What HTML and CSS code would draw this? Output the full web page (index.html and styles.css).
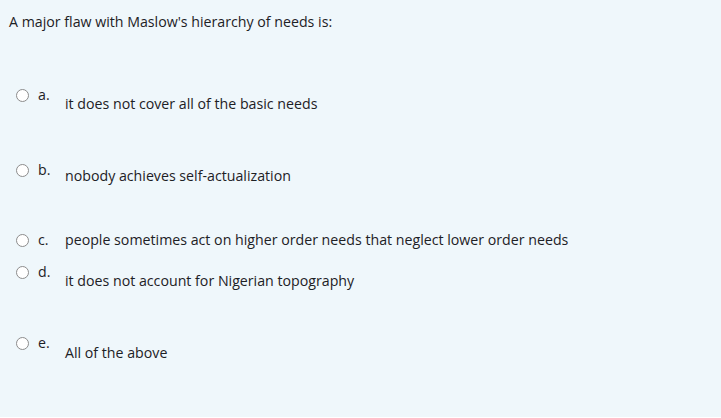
FILE: index.html
```html
<!DOCTYPE html>
<html>
<head>
<meta charset="utf-8">
<link rel="stylesheet" href="styles.css">
</head>
<body>
<div class="formulation">
  <div class="qtext">A major flaw with Maslow's hierarchy of needs is:</div>
  <div class="answers">
    <div class="opt opt-a">
      <span class="radio"></span><span class="letter">a.</span><span class="text">it does not cover all of the basic needs</span>
    </div>
    <div class="opt opt-b">
      <span class="radio"></span><span class="letter">b.</span><span class="text">nobody achieves self-actualization</span>
    </div>
    <div class="opt opt-c">
      <span class="radio"></span><span class="letter">c.</span><span class="text">people sometimes act on higher order needs that neglect lower order needs</span>
    </div>
    <div class="opt opt-d">
      <span class="radio"></span><span class="letter">d.</span><span class="text">it does not account for Nigerian topography</span>
    </div>
    <div class="opt opt-e">
      <span class="radio"></span><span class="letter">e.</span><span class="text">All of the above</span>
    </div>
  </div>
</div>
</body>
</html>
```

FILE: styles.css
```css
html, body {
  margin: 0;
  padding: 0;
  background: #ffffff;
}
body {
  font-family: "Open Sans", "Noto Sans", sans-serif;
  font-size: 14.2px;
  color: #1d2125;
}
.formulation {
  background: #eff7fb;
  height: 417px;
  box-sizing: border-box;
  padding: 12px 0 0 9px;
}
.qtext {
  line-height: 20px;
}
.answers {
  margin-top: 53px;
  padding-left: 7px;
}
.opt {
  display: flex;
  align-items: flex-start;
}
.radio {
  width: 13px;
  height: 13px;
  box-sizing: border-box;
  border: 1px solid #8c8c8c;
  border-radius: 50%;
  background: #fff;
  margin-top: 4px;
  flex: none;
}
.letter {
  margin-left: 9px;
  width: 27px;
  line-height: 20px;
}
.text {
  line-height: 20px;
}
.opt-a .text { padding-top: 9px; }
.opt-b { margin-top: 46px; }
.opt-b .text { padding-top: 6px; }
.opt-c { margin-top: 44px; }
.opt-d { margin-top: 12px; }
.opt-d .text { padding-top: 9px; }
.opt-e { margin-top: 42px; }
.opt-e .text { padding-top: 10px; }
```
